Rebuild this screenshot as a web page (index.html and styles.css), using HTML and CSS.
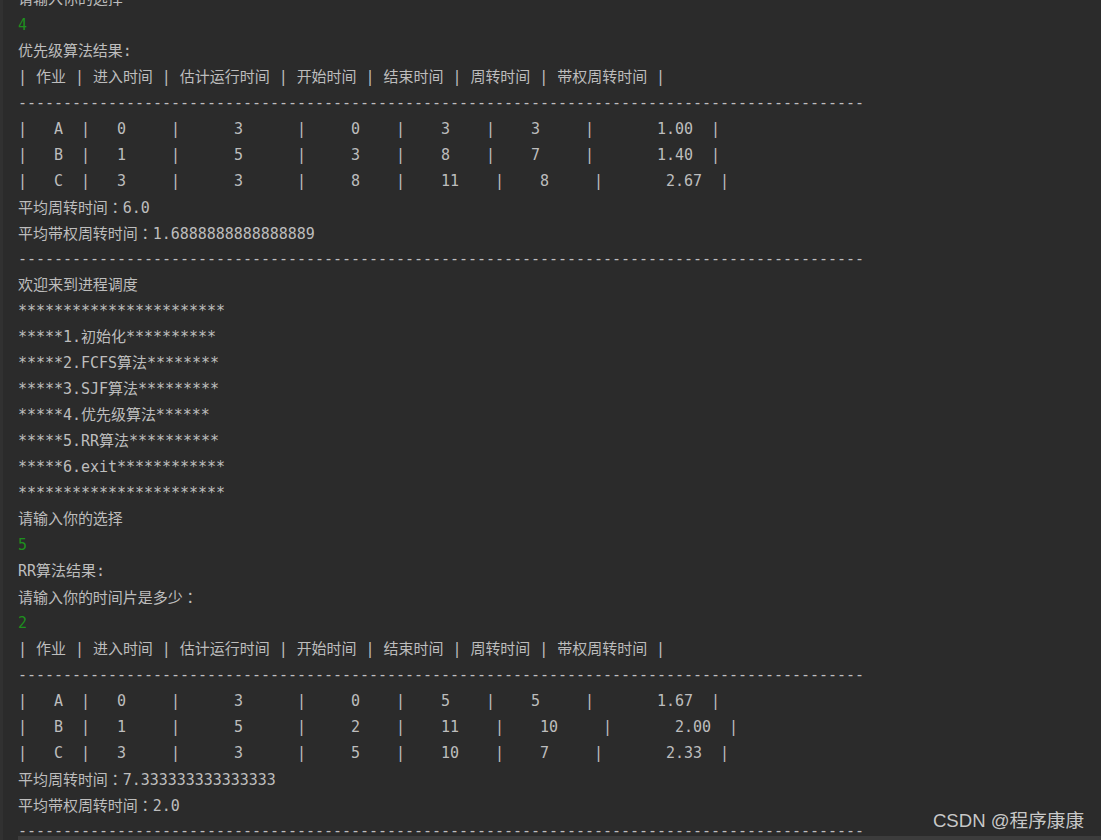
FILE: index.html
```html
<!DOCTYPE html>
<html lang="zh">
<head>
<meta charset="utf-8">
<title>Console</title>
<link rel="stylesheet" href="styles.css">
</head>
<body>
<div class="frame">
  <div class="console">
    <div class="line">请输入你的选择</div>
    <div class="line input">4</div>
    <div class="line">优先级算法结果:</div>
    <div class="line">| 作业 | 进入时间 | 估计运行时间 | 开始时间 | 结束时间 | 周转时间 | 带权周转时间 |</div>
    <div class="line">----------------------------------------------------------------------------------------------</div>
    <div class="line">|   A  |   0     |      3      |     0    |    3    |    3     |       1.00  |</div>
    <div class="line">|   B  |   1     |      5      |     3    |    8    |    7     |       1.40  |</div>
    <div class="line">|   C  |   3     |      3      |     8    |    11    |    8     |       2.67  |</div>
    <div class="line">平均周转时间<span class="fw" lang="ja">：</span>6.0</div>
    <div class="line">平均带权周转时间<span class="fw" lang="ja">：</span>1.6888888888888889</div>
    <div class="line">----------------------------------------------------------------------------------------------</div>
    <div class="line">欢迎来到进程调度</div>
    <div class="line">***********************</div>
    <div class="line">*****1.初始化**********</div>
    <div class="line">*****2.FCFS算法********</div>
    <div class="line">*****3.SJF算法*********</div>
    <div class="line">*****4.优先级算法******</div>
    <div class="line">*****5.RR算法**********</div>
    <div class="line">*****6.exit************</div>
    <div class="line">***********************</div>
    <div class="line">请输入你的选择</div>
    <div class="line input">5</div>
    <div class="line">RR算法结果:</div>
    <div class="line">请输入你的时间片是多少<span class="fw" lang="ja">：</span></div>
    <div class="line input">2</div>
    <div class="line">| 作业 | 进入时间 | 估计运行时间 | 开始时间 | 结束时间 | 周转时间 | 带权周转时间 |</div>
    <div class="line">----------------------------------------------------------------------------------------------</div>
    <div class="line">|   A  |   0     |      3      |     0    |    5    |    5     |       1.67  |</div>
    <div class="line">|   B  |   1     |      5      |     2    |    11    |    10     |       2.00  |</div>
    <div class="line">|   C  |   3     |      3      |     5    |    10    |    7     |       2.33  |</div>
    <div class="line">平均周转时间<span class="fw" lang="ja">：</span>7.333333333333333</div>
    <div class="line">平均带权周转时间<span class="fw" lang="ja">：</span>2.0</div>
    <div class="line">----------------------------------------------------------------------------------------------</div>
  </div>
  <div class="scrollbar"></div>
  <div class="watermark">CSDN @程序康康</div>
</div>
</body>
</html>
```
FILE: styles.css
```css
html, body {
  margin: 0;
  padding: 0;
  height: 100%;
  background: #2b2b2b;
  overflow: hidden;
}

.frame {
  position: relative;
  height: 840px;
  box-sizing: border-box;
  border-left: 3px solid #313131;
  overflow: hidden;
}

.console {
  display: flex;
  flex-direction: column;
  margin-top: -14px;
  padding-left: 15px;
  font-family: "DejaVu Sans Mono", "Noto Sans CJK SC", monospace;
  font-size: 15px;
  letter-spacing: -0.03px;
  color: #bdbdbd;
}

.line {
  height: 26px;
  line-height: 26px;
  white-space: pre;
}

.fw {
  font-family: "Noto Sans CJK JP", "Noto Sans CJK TC", sans-serif;
}

.input {
  color: #1e8f1e;
}

.scrollbar {
  position: absolute;
  left: 15px;
  right: 0;
  bottom: 0;
  height: 4px;
  background: #3c3c3c;
}

.watermark {
  position: absolute;
  right: 17px;
  top: 809px;
  font-family: "Liberation Sans", "Noto Sans CJK SC", sans-serif;
  font-size: 18.6px;
  line-height: 24px;
  color: #c8c8c8;
  text-shadow: 0 0 1px #222222;
}
```
